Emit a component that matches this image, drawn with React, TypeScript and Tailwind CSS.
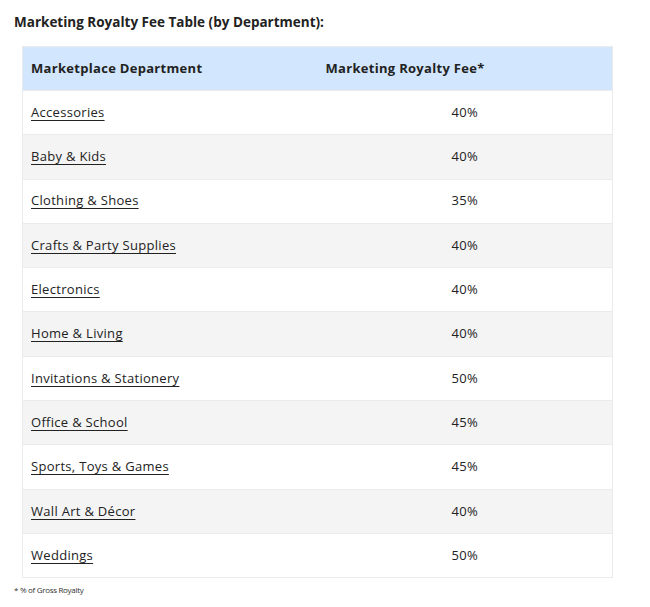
import React from "react";

const ROWS = [
  { dept: "Accessories", fee: "40%" },
  { dept: "Baby & Kids", fee: "40%" },
  { dept: "Clothing & Shoes", fee: "35%" },
  { dept: "Crafts & Party Supplies", fee: "40%" },
  { dept: "Electronics", fee: "40%" },
  { dept: "Home & Living", fee: "40%" },
  { dept: "Invitations & Stationery", fee: "50%" },
  { dept: "Office & School", fee: "45%" },
  { dept: "Sports, Toys & Games", fee: "45%" },
  { dept: "Wall Art & Décor", fee: "40%" },
  { dept: "Weddings", fee: "50%" },
];

export default function App() {
  return (
    <div className="min-h-[607px] w-[650px] bg-white text-[#222] font-['Open_Sans',sans-serif]">
      <div className="pl-[14px] pt-[12px]">
        <h3 className="text-[13.5px] font-bold leading-[20px]">
          Marketing Royalty Fee Table (by Department):
        </h3>
      </div>
      <div className="pl-[22px] pr-[37px] pt-[14px]">
        <table className="w-full table-fixed border-collapse border border-[#ebebeb] text-[13px] tracking-[0.3px]">
          <thead>
            <tr className="h-[44px] bg-[#d2e7fd]">
              <th className="px-[8px] text-left font-bold">
                Marketplace Department
              </th>
              <th className="px-[8px] text-left font-bold">
                Marketing Royalty Fee*
              </th>
            </tr>
          </thead>
          <tbody>
            {ROWS.map((row, i) => (
              <tr
                key={row.dept}
                className={`h-[44.3px] ${i % 2 === 1 ? "bg-[#f4f4f4]" : "bg-white"}`}
              >
                <td className="border-t border-[#ebebeb] px-[8px]">
                  <a href="#" className="underline underline-offset-[3px] text-[#222]">
                    {row.dept}
                  </a>
                </td>
                <td className="border-t border-[#ebebeb] px-[8px] text-center">
                  {row.fee}
                </td>
              </tr>
            ))}
          </tbody>
        </table>
      </div>
      <p className="pl-[14px] pt-[6px] text-[8px] tracking-[-0.3px] text-[#333]">
        * % of Gross Royalty
      </p>
    </div>
  );
}
